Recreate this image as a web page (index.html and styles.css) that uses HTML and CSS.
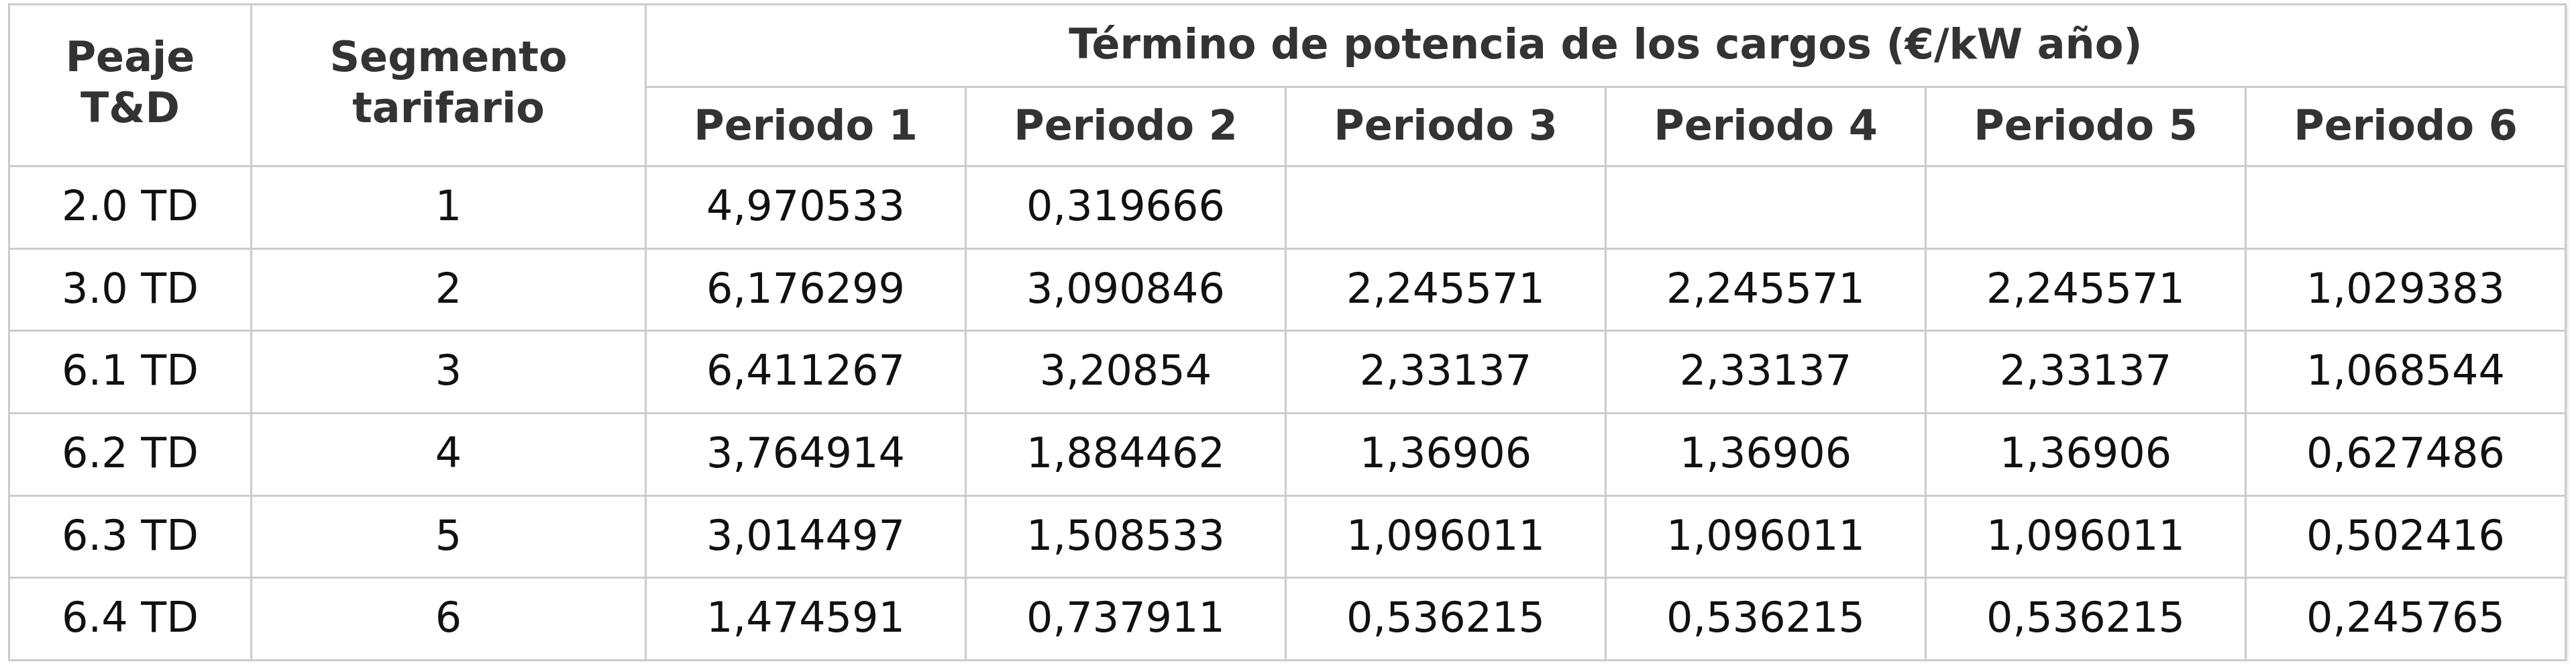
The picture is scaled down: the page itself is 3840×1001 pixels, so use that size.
FILE: index.html
```html
<!DOCTYPE html>
<html lang="es">
<head>
<meta charset="utf-8">
<title>Término de potencia de los cargos</title>
<link rel="stylesheet" href="styles.css">
</head>
<body>
<table class="tarifas">
  <colgroup>
    <col class="c-peaje">
    <col class="c-seg">
    <col class="c-per"><col class="c-per"><col class="c-per">
    <col class="c-per"><col class="c-per"><col class="c-per">
  </colgroup>
  <thead>
    <tr class="h1">
      <th rowspan="2" class="two">Peaje<br>T&amp;D</th>
      <th rowspan="2" class="two">Segmento<br>tarifario</th>
      <th colspan="6">Término de potencia de los cargos (€/kW año)</th>
    </tr>
    <tr class="h2">
      <th>Periodo 1</th><th>Periodo 2</th><th>Periodo 3</th>
      <th>Periodo 4</th><th>Periodo 5</th><th>Periodo 6</th>
    </tr>
  </thead>
  <tbody>
    <tr><td>2.0 TD</td><td>1</td><td>4,970533</td><td>0,319666</td><td></td><td></td><td></td><td></td></tr>
    <tr><td>3.0 TD</td><td>2</td><td>6,176299</td><td>3,090846</td><td>2,245571</td><td>2,245571</td><td>2,245571</td><td>1,029383</td></tr>
    <tr><td>6.1 TD</td><td>3</td><td>6,411267</td><td>3,20854</td><td>2,33137</td><td>2,33137</td><td>2,33137</td><td>1,068544</td></tr>
    <tr><td>6.2 TD</td><td>4</td><td>3,764914</td><td>1,884462</td><td>1,36906</td><td>1,36906</td><td>1,36906</td><td>0,627486</td></tr>
    <tr><td>6.3 TD</td><td>5</td><td>3,014497</td><td>1,508533</td><td>1,096011</td><td>1,096011</td><td>1,096011</td><td>0,502416</td></tr>
    <tr><td>6.4 TD</td><td>6</td><td>1,474591</td><td>0,737911</td><td>0,536215</td><td>0,536215</td><td>0,536215</td><td>0,245765</td></tr>
  </tbody>
</table>
</body>
</html>
```

FILE: styles.css
```css
html, body {
  margin: 0;
  padding: 0;
  background: #ffffff;
}

body {
  padding: 5px 0 0 12px;
  font-family: "DejaVu Sans", Verdana, sans-serif;
}

.tarifas {
  border-collapse: collapse;
  table-layout: fixed;
  width: 3814px;
  font-size: 62px;
  color: #111111;
  box-shadow: 2px 3px 4px rgba(0, 0, 0, 0.12);
}

.c-peaje { width: 361px; }
.c-seg { width: 588px; }
.c-per { width: 477px; }

.tarifas th,
.tarifas td {
  border: 3px solid #cccccc;
  text-align: center;
  vertical-align: middle;
  padding: 0 0 5px 0;
  line-height: 75px;
  white-space: nowrap;
}

.tarifas th {
  font-weight: bold;
  color: #333333;
}

.tarifas .two {
  line-height: 76px;
  padding-bottom: 8px;
}

.h1 { height: 123px; }
.h2 { height: 118px; }
.tarifas tbody tr { height: 122.7px; }
```
